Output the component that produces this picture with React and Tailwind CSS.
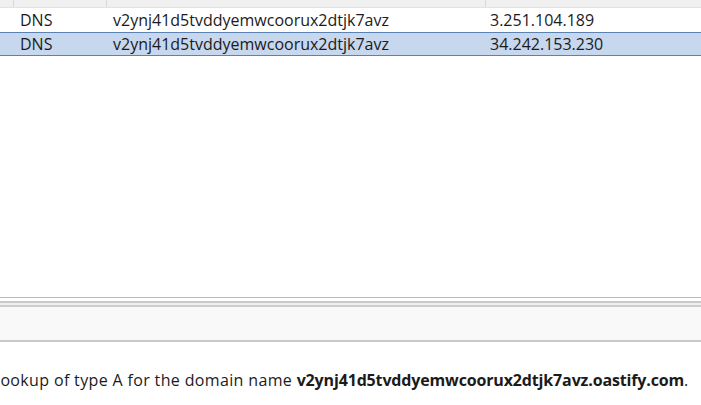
import React from 'react';

const rows = [
  { type: 'DNS', payload: 'v2ynj41d5tvddyemwcoorux2dtjk7avz', source: '3.251.104.189', selected: false },
  { type: 'DNS', payload: 'v2ynj41d5tvddyemwcoorux2dtjk7avz', source: '34.242.153.230', selected: true },
];

export default function App() {
  return (
    <div className="w-[701px] h-[405px] bg-white overflow-hidden text-[16px] leading-[24px] text-[#1b1b1b]" style={{ fontFamily: '"Open Sans", "Noto Sans", sans-serif' }}>
      {/* table header (scrolled) */}
      <div className="flex h-[8px] bg-[#f0f0f0] border-b border-[#e3e3e3]">
        <div className="w-[14px] border-r border-[#d9d9d9]" />
        <div className="w-[93px] border-r border-[#d9d9d9]" />
        <div className="w-[379px] border-r border-[#d9d9d9]" />
        <div className="flex-1" />
      </div>

      {/* rows */}
      <div>
        {rows.map((r, i) => (
          <div
            key={i}
            className={
              r.selected
                ? 'flex h-[24px] items-center bg-[#c6d7ee] border-y border-[#5b82b5]'
                : 'flex h-[24px] items-center border-y border-transparent'
            }
          >
            <div className="w-[20px] shrink-0" />
            <div className="w-[93px] shrink-0">{r.type}</div>
            <div className="w-[377px] shrink-0 whitespace-nowrap">{r.payload}</div>
            <div className="flex-1 whitespace-nowrap">{r.source}</div>
          </div>
        ))}
      </div>

      {/* empty space */}
      <div className="h-[241px]" />

      {/* splitter */}
      <div className="h-[1px] bg-[#9cc1ec]" />
      <div className="h-[3px] bg-white" />
      <div className="h-[2px] bg-[#c9c9c9]" />
      <div className="h-[2px] bg-[#efefef]" />
      <div className="h-[2px] bg-[#cdcdcd]" />
      <div className="h-[33px] bg-[#f9f9f9]" />
      <div className="h-[2px] bg-[#c9c9c9]" />

      {/* description */}
      <div className="pt-[26px] whitespace-nowrap -ml-[4px]">
        <span className="tracking-[0.35px]">lookup of type A for the domain name </span>
        <span className="font-bold tracking-[-0.15px]">v2ynj41d5tvddyemwcoorux2dtjk7avz.oastify.com</span>.
      </div>
    </div>
  );
}
